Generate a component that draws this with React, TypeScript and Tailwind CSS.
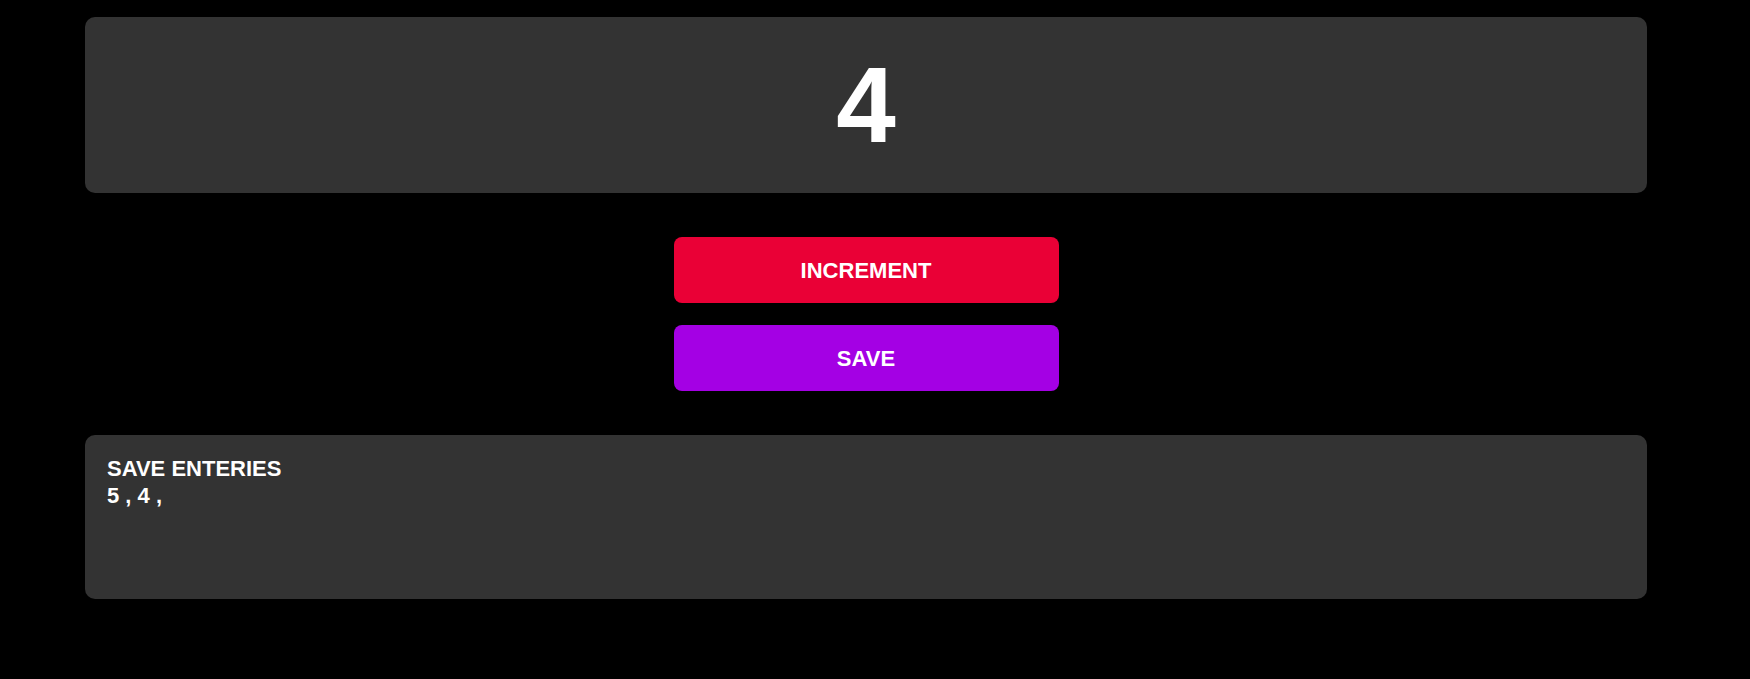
export default function App() {
  const count = 4;
  const entries = [5, 4];

  return (
    <div className="min-h-screen w-full bg-black pt-[17px] font-['Liberation_Sans',Arial,sans-serif] text-white">
      {/* Counter display */}
      <div className="ml-[85px] flex h-[176px] w-[1562px] items-center justify-center rounded-[10px] bg-[#333333]">
        <span className="text-[107px] font-bold leading-none">{count}</span>
      </div>

      {/* Actions */}
      <div className="ml-[85px] flex w-[1562px] flex-col items-center gap-[22px] py-[44px]">
        <button className="h-[66px] w-[385px] rounded-[8px] bg-[#ea0036] text-[22px] font-bold">
          INCREMENT
        </button>
        <button className="h-[66px] w-[385px] rounded-[8px] bg-[#a400e4] text-[22px] font-bold">
          SAVE
        </button>
      </div>

      {/* Saved entries */}
      <div className="ml-[85px] h-[164px] w-[1562px] rounded-[10px] bg-[#333333] px-[22px] pt-[20px] text-[22px] font-bold leading-[27px]">
        <p>SAVE ENTERIES</p>
        <p>{entries.map((e) => `${e} , `).join("")}</p>
      </div>
    </div>
  );
}
